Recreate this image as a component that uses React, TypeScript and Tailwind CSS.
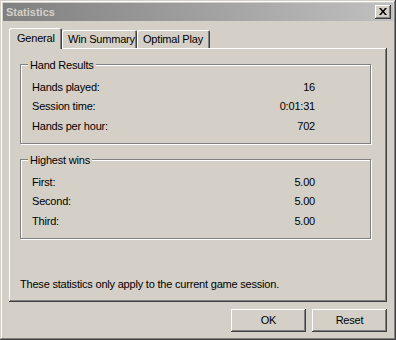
import React from "react";

const HAND_RESULTS = [
  { label: "Hands played:", value: "16" },
  { label: "Session time:", value: "0:01:31" },
  { label: "Hands per hour:", value: "702" },
];

const HIGHEST_WINS = [
  { label: "First:", value: "5.00" },
  { label: "Second:", value: "5.00" },
  { label: "Third:", value: "5.00" },
];

const TABS = [
  { label: "General", width: "w-[53px]" },
  { label: "Win Summary", width: "w-[75px]" },
  { label: "Optimal Play", width: "w-[73px]" },
];

function GroupBox({
  title,
  rows,
}: {
  title: string;
  rows: { label: string; value: string }[];
}) {
  return (
    <div className="h-[80px] border border-[#808080] shadow-[inset_1px_1px_#fff,1px_1px_#fff]">
      <div className="-mt-[8px] ml-[7px] h-[16px] flex">
        <span className="bg-[#d4d0c8] px-[2px] leading-[16px]">{title}</span>
      </div>
      <div className="pl-[11px] pr-[55px] pt-[4px]">
        {rows.map((row) => (
          <div
            key={row.label}
            className="flex h-[19.5px] items-center justify-between"
          >
            <span>{row.label}</span>
            <span>{row.value}</span>
          </div>
        ))}
      </div>
    </div>
  );
}

function Button({ children }: { children: React.ReactNode }) {
  return (
    <button
      type="button"
      className="h-[23px] w-[75px] bg-[#d4d0c8] text-black shadow-[inset_-1px_-1px_#404040,inset_1px_1px_#fff,inset_-2px_-2px_#808080,inset_2px_2px_#d4d0c8]"
    >
      {children}
    </button>
  );
}

export default function App() {
  return (
    <div
      className="flex h-[340px] w-[396px] flex-col bg-[#d4d0c8] p-[3px] text-[11px] tracking-[-0.2px] text-black shadow-[inset_-1px_-1px_#404040,inset_1px_1px_#d4d0c8,inset_-2px_-2px_#808080,inset_2px_2px_#fff]"
      style={{ fontFamily: '"Liberation Sans", Arial, sans-serif' }}
    >
      {/* title bar (inactive) */}
      <div className="flex h-[18px] items-center justify-between bg-gradient-to-r from-[#808080] to-[#c0c0c0] pl-[3px] pr-[2px]">
        <span className="text-[11px] font-bold tracking-normal text-[#d4d0c8]">
          Statistics
        </span>
        <div className="flex h-[14px] w-[16px] items-center justify-center bg-[#d4d0c8] shadow-[inset_-1px_-1px_#404040,inset_1px_1px_#fff,inset_-2px_-2px_#808080]">
          <svg width="8" height="7" viewBox="0 0 8 7" className="-mt-[1px]">
            <path
              d="M0 0h2l2 2.5 2-2.5h2L5 3.5 8 7H6L4 4.5 2 7H0l3-3.5z"
              fill="#000"
            />
          </svg>
        </div>
      </div>

      <div className="px-[6px] pt-[7px]">
        {/* tabs */}
        <div className="relative z-10 flex h-[20px] items-end">
          {TABS.map((tab, i) => {
            const active = i === 0;
            return (
              <div
                key={tab.label}
                className={`${tab.width} flex items-center whitespace-nowrap rounded-t-[2px] shadow-[inset_1px_1px_#fff,inset_-1px_0_#404040,inset_-2px_0_#808080] ${
                  active
                    ? "h-[21px] -mb-[1px] bg-[#d4d0c8] pl-[8px] pb-[1px]"
                    : "h-[18px] pl-[6px]"
                }`}
              >
                {tab.label}
              </div>
            );
          })}
        </div>

        {/* panel */}
        <div className="flex h-[254px] flex-col px-[11px] pr-[16px] pt-[16px] shadow-[inset_-1px_-1px_#404040,inset_1px_1px_#fff,inset_-2px_-2px_#808080]">
          <GroupBox title="Hand Results" rows={HAND_RESULTS} />
          <div className="mt-[15px]">
            <GroupBox title="Highest wins" rows={HIGHEST_WINS} />
          </div>
          <p className="mt-[37px]">
            These statistics only apply to the current game session.
          </p>
        </div>
      </div>

      {/* buttons */}
      <div className="flex justify-end gap-[6px] pr-[6px] pt-[7px]">
        <Button>OK</Button>
        <Button>Reset</Button>
      </div>
    </div>
  );
}
